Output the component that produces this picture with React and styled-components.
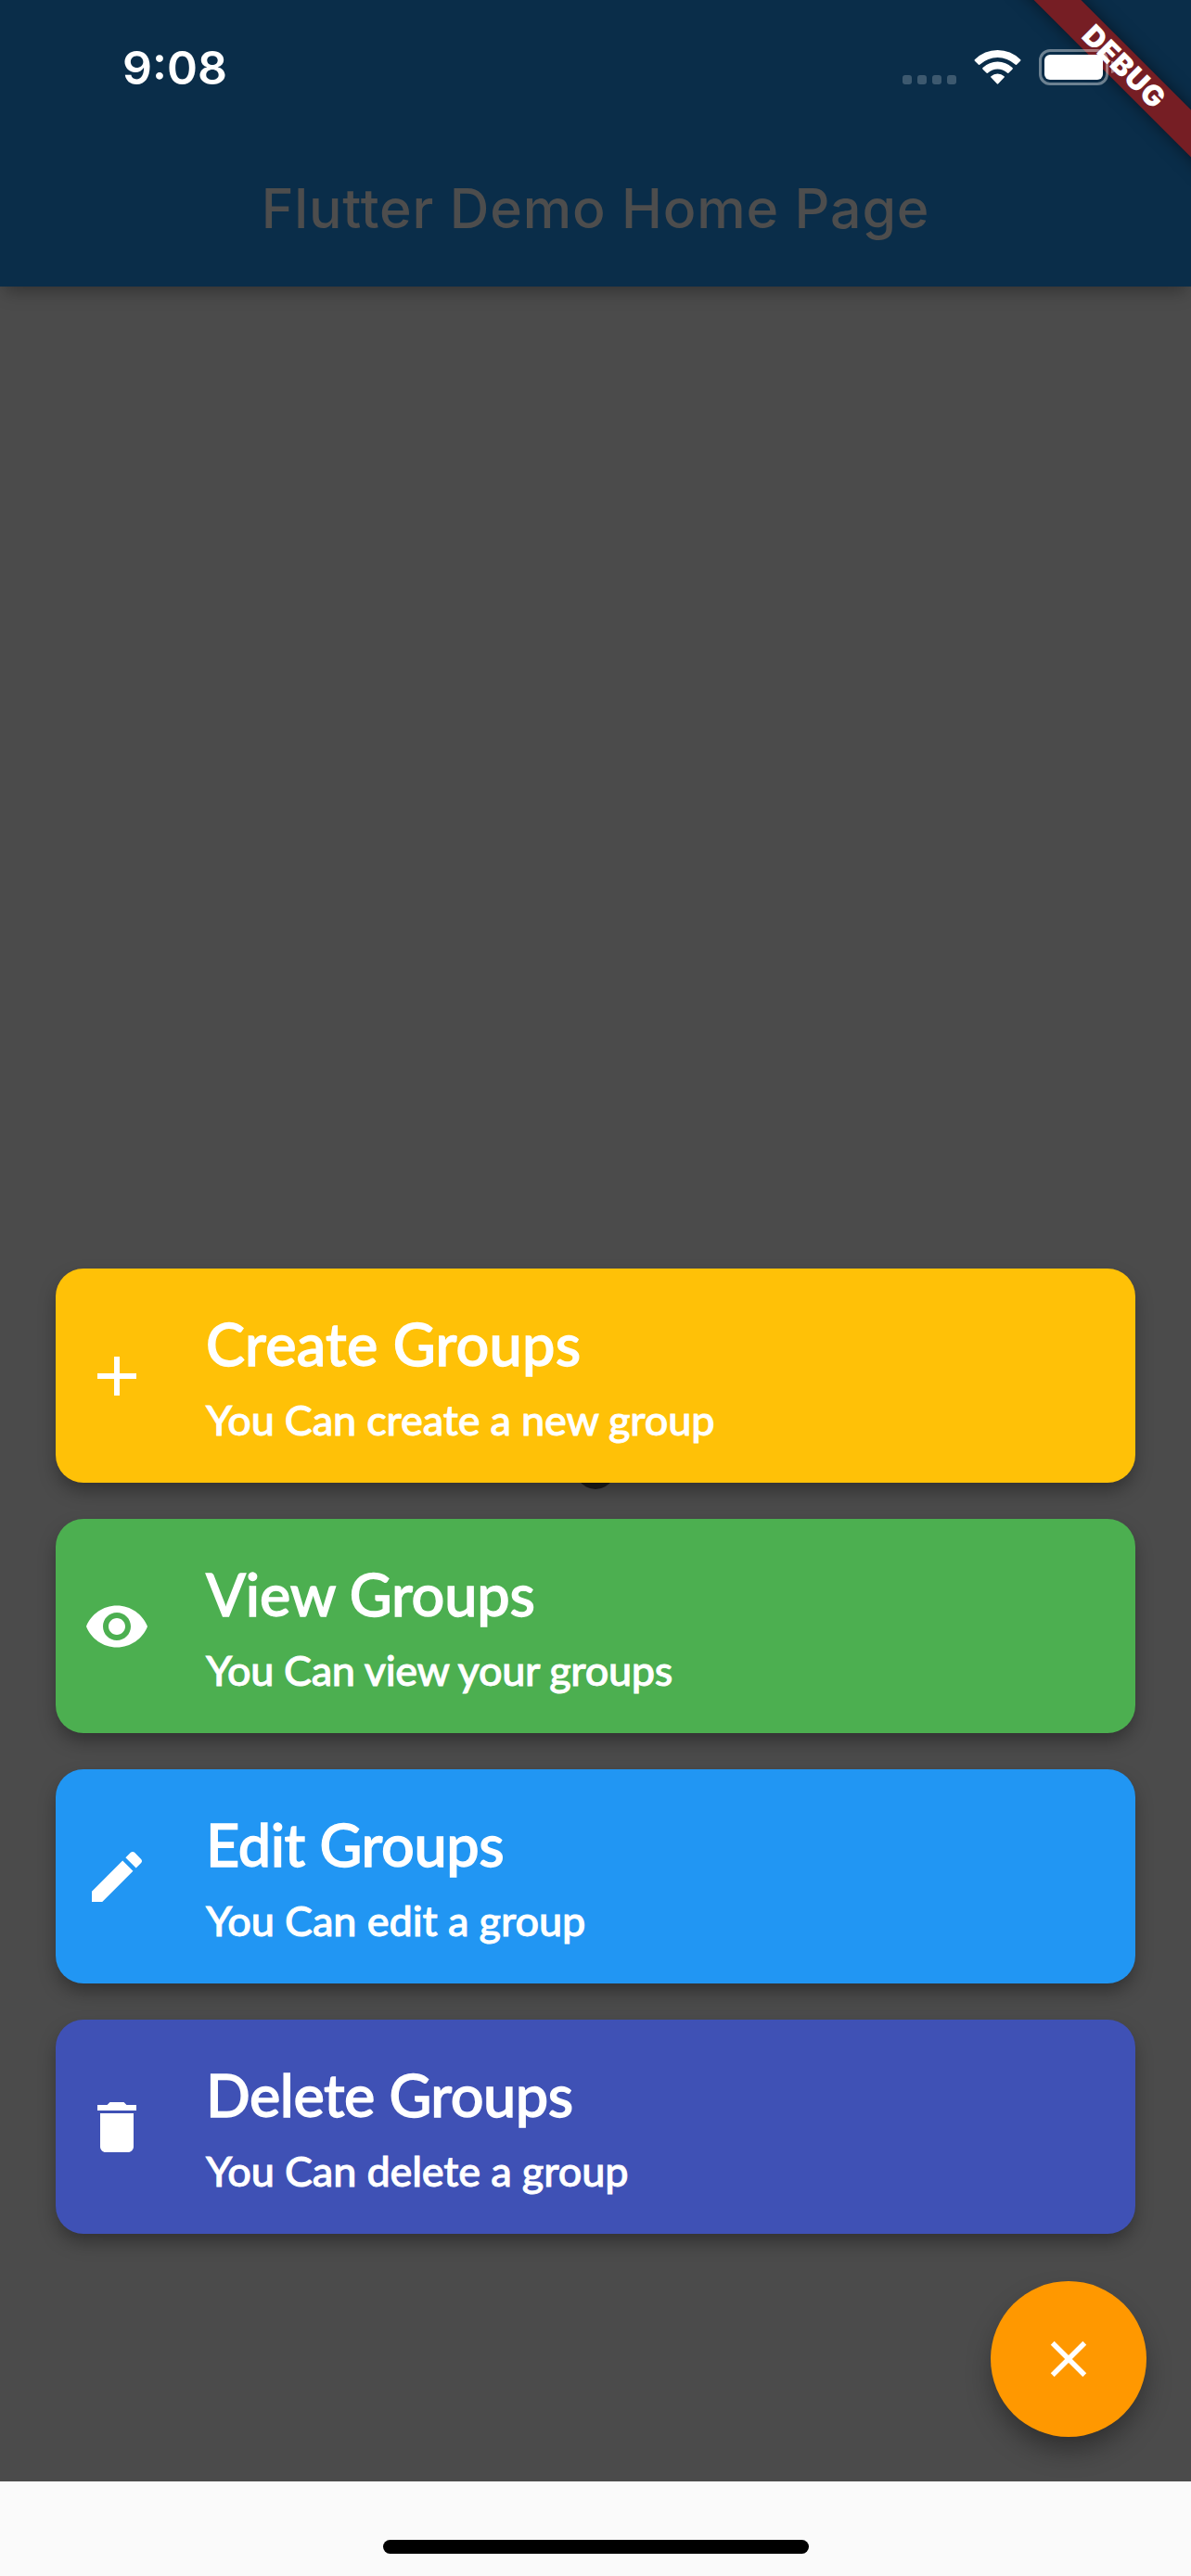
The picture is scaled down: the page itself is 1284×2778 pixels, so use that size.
import React from "react";
import styled, { createGlobalStyle } from "styled-components";

const GlobalStyle = createGlobalStyle`
  html, body { margin: 0; padding: 0; background: #fafafa; }
  *, *::before, *::after { box-sizing: border-box; }
`;

const Screen = styled.div`
  width: 1284px;
  height: 2778px;
  overflow: hidden;
  display: flex;
  flex-direction: column;
  background: #fafafa;
  font-family: Inter, "Liberation Sans", sans-serif;
`;

const Header = styled.header`
  position: relative;
  z-index: 1;
  flex: 0 0 309px;
  display: flex;
  flex-direction: column;
  background: #0a2d49;
  box-shadow: 0 9px 18px -5px rgba(0, 0, 0, 0.36);
`;

const StatusBar = styled.div`
  height: 141px;
  display: flex;
  justify-content: space-between;
  padding: 53px 81px 0 132px;
  color: #fff;
`;

const Clock = styled.time`
  height: 39px;
  line-height: 40px;
  font-size: 50px;
  font-weight: 600;
`;

const StatusIcons = styled.div`
  position: relative;
  z-index: 3;
  display: flex;
  height: 39px;
`;

const SignalDots = styled.div`
  display: flex;
  align-items: flex-end;
  gap: 6px;
  margin-right: 19px;
  padding-bottom: 1px;
`;

const Dot = styled.span`
  width: 10px;
  height: 10px;
  border-radius: 3px;
  background: rgba(255, 255, 255, 0.21);
`;

const WifiIcon = styled.svg`
  width: 52px;
  height: 39px;
  margin-right: 18px;
  fill: #fff;
`;

const Battery = styled.div`
  width: 75px;
  height: 39px;
  padding: 3px;
  border: 3px solid rgba(255, 255, 255, 0.4);
  border-radius: 12px;
`;

const BatteryLevel = styled.div`
  height: 27px;
  border-radius: 6px;
  background: #fff;
`;

const BatteryCap = styled.span`
  align-self: center;
  width: 5px;
  height: 13px;
  margin-left: 3px;
  border-radius: 0 5px 5px 0;
  background: rgba(255, 255, 255, 0.4);
`;

const PageTitle = styled.h1`
  flex: 1;
  margin: 0;
  display: flex;
  align-items: center;
  justify-content: center;
  font-size: 59px;
  line-height: 72px;
  font-weight: 500;
  letter-spacing: 0.85px;
  color: #4d4d4d;
`;

const RibbonClip = styled.div`
  position: absolute;
  top: 0;
  right: 0;
  width: 260px;
  height: 260px;
  overflow: hidden;
  z-index: 2;
`;

const Ribbon = styled.div`
  position: absolute;
  left: 38px;
  top: 54px;
  width: 300px;
  height: 36px;
  transform: rotate(45deg);
  background: #761e24;
  box-shadow: 0 0 18px rgba(0, 0, 0, 0.5);
  color: #fff;
  text-align: center;
  font-size: 31px;
  line-height: 35px;
  font-weight: 900;
  letter-spacing: 0.8px;
`;

const Body = styled.main`
  flex: 0 0 2367px;
  display: grid;
  grid-template: 100% / 100%;
  background: #4b4b4b;
`;

const CounterGlyph = styled.div`
  grid-area: 1 / 1;
  justify-self: center;
  width: 54px;
  height: 74px;
  margin-top: 1223px;
  border-radius: 50%;
  background: #1d1d1d;
`;

const SpeedDial = styled.div`
  grid-area: 1 / 1;
  z-index: 1;
  display: flex;
  flex-direction: column;
  justify-content: flex-end;
  padding: 0 48px 48px 60px;
`;

const ActionList = styled.nav`
  display: flex;
  flex-direction: column;
  gap: 39px;
  margin: 0 12px 51px 0;
`;

const Card = styled.button`
  display: flex;
  width: 100%;
  height: 231px;
  padding: 0 30px;
  border: 0;
  border-radius: 30px;
  background: ${(p) => p.$color};
  box-shadow: 0 10px 20px -2px rgba(0, 0, 0, 0.36);
  color: #fff;
  text-align: left;
  font-family: Futura, Lato, sans-serif;
`;

const CardIcon = styled.svg`
  flex: none;
  width: 72px;
  height: 72px;
  margin: 80px 60px 0 0;
  fill: currentColor;
`;

const CardText = styled.div`
  display: flex;
  flex-direction: column;
  padding-top: 41px;
`;

const CardTitle = styled.div`
  height: 80px;
  line-height: 80px;
  font-size: 63px;
  font-weight: 500;
  -webkit-text-stroke: 1.3px currentColor;
  letter-spacing: ${(p) => p.$track}px;
  white-space: nowrap;
`;

const CardSubtitle = styled.div`
  height: 60px;
  line-height: 60px;
  margin-top: 12px;
  font-size: 45px;
  font-weight: 500;
  -webkit-text-stroke: 0.9px currentColor;
  letter-spacing: ${(p) => p.$track}px;
  white-space: nowrap;
`;

const CloseButton = styled.button`
  align-self: flex-end;
  flex: none;
  display: grid;
  place-items: center;
  width: 168px;
  height: 168px;
  padding: 0;
  border: 0;
  border-radius: 50%;
  background: #ff9800;
  box-shadow: 0 16px 30px -4px rgba(0, 0, 0, 0.4);
`;

const CloseIcon = styled.svg`
  width: 66px;
  height: 66px;
  fill: #fff;
`;

const BottomArea = styled.footer`
  flex: 1;
  display: flex;
  justify-content: center;
  align-items: flex-end;
  padding: 0 0 24px 1px;
  background: #fafafa;
`;

const HomeIndicator = styled.div`
  width: 459px;
  height: 15px;
  border-radius: 8px;
  background: #000;
`;

const actions = [
  {
    title: "Create Groups",
    subtitle: "You Can create a new group",
    color: "#ffc107",
    icon: "M19 13h-6v6h-2v-6H5v-2h6V5h2v6h6v2z",
    titleTrack: 0.24,
    subtitleTrack: -0.17,
  },
  {
    title: "View Groups",
    subtitle: "You Can view your groups",
    color: "#4caf50",
    icon: "M12 4.5C7 4.5 2.73 7.61 1 12c1.73 4.39 6 7.5 11 7.5s9.27-3.11 11-7.5c-1.73-4.39-6-7.5-11-7.5zM12 17c-2.76 0-5-2.24-5-5s2.24-5 5-5 5 2.24 5 5-2.24 5-5 5zm0-8c-1.66 0-3 1.34-3 3s1.34 3 3 3 3-1.34 3-3-1.34-3-3-3z",
    titleTrack: -0.2,
    subtitleTrack: -0.35,
  },
  {
    title: "Edit Groups",
    subtitle: "You Can edit a group",
    color: "#2196f3",
    icon: "M3 17.25V21h3.75L17.81 9.94l-3.75-3.75L3 17.25zM20.71 7.04c.39-.39.39-1.02 0-1.41l-2.34-2.34c-.39-.39-1.02-.39-1.41 0l-1.83 1.83 3.75 3.75 1.83-1.83z",
    titleTrack: -0.4,
    subtitleTrack: -0.1,
  },
  {
    title: "Delete Groups",
    subtitle: "You Can delete a group",
    color: "#3f51b5",
    icon: "M6 19c0 1.1.9 2 2 2h8c1.1 0 2-.9 2-2V7H6v12zM19 4h-3.5l-1-1h-5l-1 1H5v2h14V4z",
    titleTrack: -0.5,
    subtitleTrack: -0.14,
  },
];

export default function App() {
  return (
    <Screen>
      <GlobalStyle />
      <Header>
        <StatusBar>
          <Clock>9:08</Clock>
          <StatusIcons>
            <SignalDots>
              <Dot />
              <Dot />
              <Dot />
              <Dot />
            </SignalDots>
            <WifiIcon viewBox="0 0 52 39">
              <path d="M.8 11.2Q.1 12 .9 12.7L5 16.7Q5.8 17.3 6.5 16.6Q15 9 25.5 9Q36 9 44.5 16.6Q45.2 17.3 46 16.7L50.1 12.7Q50.9 12 50.2 11.2Q39.5 1 25.5 1Q11.5 1 .8 11.2Z" />
              <path d="M9.5 20.1Q8.7 20.9 9.5 21.7L13.7 25.7Q14.4 26.3 15.2 25.6Q19.8 21.4 25.5 21.4Q31.2 21.4 35.8 25.6Q36.6 26.3 37.3 25.7L41.5 21.7Q42.3 20.9 41.5 20.1Q34.5 13.6 25.5 13.6Q16.5 13.6 9.5 20.1Z" />
              <path d="M18.4 29.2Q17.7 29.9 18.4 30.6L24.8 37.3Q25.5 38.1 26.2 37.3L32.6 30.6Q33.3 29.9 32.6 29.2Q29.5 26.5 25.5 26.5Q21.5 26.5 18.4 29.2Z" />
            </WifiIcon>
            <Battery>
              <BatteryLevel />
            </Battery>
            <BatteryCap />
          </StatusIcons>
        </StatusBar>
        <PageTitle>Flutter Demo Home Page</PageTitle>
        <RibbonClip>
          <Ribbon>DEBUG</Ribbon>
        </RibbonClip>
      </Header>
      <Body>
        <CounterGlyph />
        <SpeedDial>
          <ActionList>
            {actions.map((a) => (
              <Card key={a.title} $color={a.color}>
                <CardIcon viewBox="0 0 24 24">
                  <path d={a.icon} />
                </CardIcon>
                <CardText>
                  <CardTitle $track={a.titleTrack}>{a.title}</CardTitle>
                  <CardSubtitle $track={a.subtitleTrack}>{a.subtitle}</CardSubtitle>
                </CardText>
              </Card>
            ))}
          </ActionList>
          <CloseButton aria-label="Close">
            <CloseIcon viewBox="0 0 24 24">
              <path d="M19 6.41L17.59 5 12 10.59 6.41 5 5 6.41 10.59 12 5 17.59 6.41 19 12 13.41 17.59 19 19 17.59 13.41 12z" />
            </CloseIcon>
          </CloseButton>
        </SpeedDial>
      </Body>
      <BottomArea>
        <HomeIndicator />
      </BottomArea>
    </Screen>
  );
}
